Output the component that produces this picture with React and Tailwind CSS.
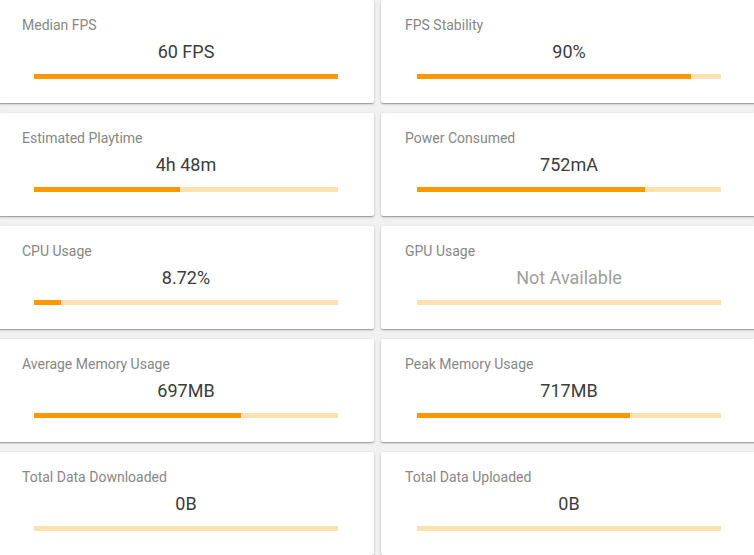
import React from "react";

const stats = [
    { label: "Median FPS", value: "60 FPS", pct: 100 },
    { label: "FPS Stability", value: "90%", pct: 90 },
    { label: "Estimated Playtime", value: "4h 48m", pct: 48 },
    { label: "Power Consumed", value: "752mA", pct: 75 },
    { label: "CPU Usage", value: "8.72%", pct: 8.72 },
    { label: "GPU Usage", value: "Not Available", pct: 0, na: true },
    { label: "Average Memory Usage", value: "697MB", pct: 68 },
    { label: "Peak Memory Usage", value: "717MB", pct: 70 },
    { label: "Total Data Downloaded", value: "0B", pct: 0 },
    { label: "Total Data Uploaded", value: "0B", pct: 0 },
];

const StatCard = ({ label, value, pct, na }) => (
    <div className="h-[103px] bg-white rounded-[2px] shadow-[0_1px_3px_rgba(0,0,0,0.2),0_1px_1px_rgba(0,0,0,0.14),0_2px_1px_-1px_rgba(0,0,0,0.12)] pt-[15px] px-[24px] flex flex-col">
        <div className="text-[14px] leading-5 text-[#878787]">{label}</div>
        <div
            className={`mt-[3px] text-[18px] leading-7 text-center ${
                na ? "text-[#9e9e9e]" : "text-[#3c3c3c]"
            }`}
        >
            {value}
        </div>
        <div className="mt-2 mx-[12px] h-[5px] bg-[#ffe0b2]">
            <div className="h-full bg-[#ff9800]" style={{ width: `${pct}%` }} />
        </div>
    </div>
);

export default function App() {
    return (
        <div
            className="w-[754px] h-[555px] overflow-hidden bg-[#f1f1f1]"
            style={{ fontFamily: "Roboto, 'Liberation Sans', sans-serif" }}
        >
            <div className="-ml-[2px] w-[759px] grid grid-cols-2 gap-x-[7px] gap-y-[10px]">
                {stats.map((s) => (
                    <StatCard key={s.label} {...s} />
                ))}
            </div>
        </div>
    );
}
